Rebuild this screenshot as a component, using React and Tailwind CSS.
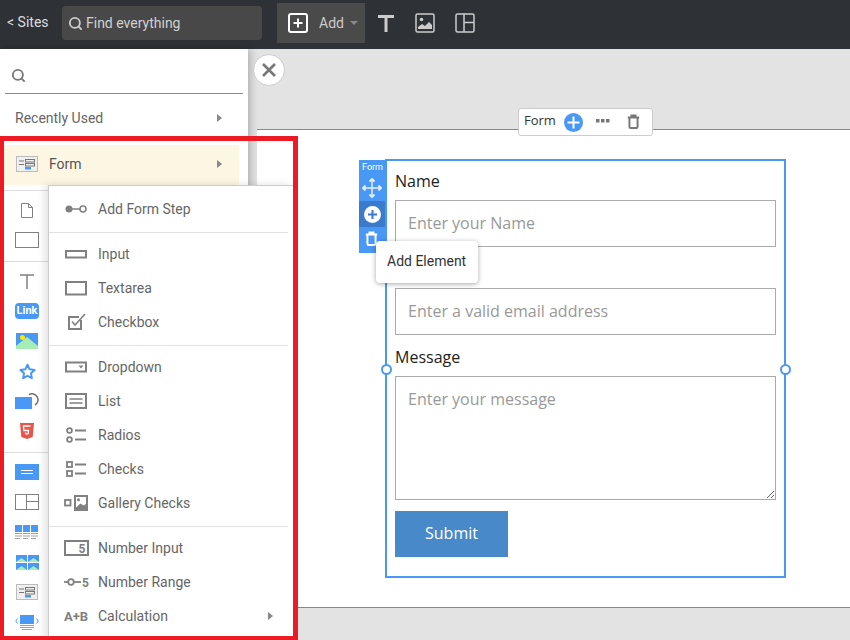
import { Search } from 'lucide-react';

const Caret = () => (
    <svg width="5" height="8" viewBox="0 0 5 8"><path d="M0 0l5 4-5 4z" fill="#888" /></svg>
);

const TrashIcon = ({ color }) => (
    <svg width="13" height="15" viewBox="0 0 16 18" fill="none" stroke={color} strokeWidth="2.400">
        <path d="M1 4h14M5.500 3.500V1.500h5v2M3 4.500V15.500a1.500 1.500 0 0 0 1.500 1.500h7a1.500 1.500 0 0 0 1.500-1.500V4.500" />
    </svg>
);

const FormGlyph = () => (
    <svg width="22" height="16" viewBox="0 0 22 16">
        <rect x="0.5" y="0.5" width="21" height="15" fill="#f0f0f0" stroke="#bbb" />
        <path d="M3 5h5M3 8.500h5" stroke="#777" />
        <rect x="9.500" y="3.500" width="9" height="2.500" fill="none" stroke="#777" />
        <rect x="9.500" y="7.500" width="9" height="2.500" fill="none" stroke="#777" />
        <rect x="9" y="11" width="6" height="2.500" fill="#4a98f5" />
    </svg>
);

const menuIcon = {
    step: (
        <>
            <circle cx="6" cy="10" r="3.500" fill="#808080" />
            <path d="M9 10h8" stroke="#808080" strokeWidth="1.500" />
            <circle cx="20" cy="10" r="3" fill="none" stroke="#808080" strokeWidth="1.500" />
        </>
    ),
    input: <rect x="3" y="7" width="20" height="6.500" fill="none" stroke="#808080" strokeWidth="2" />,
    textarea: <rect x="3" y="4" width="20" height="12.500" fill="none" stroke="#808080" strokeWidth="2" />,
    checkbox: (
        <>
            <path d="M18 8v9H6V5h10" fill="none" stroke="#808080" strokeWidth="2" />
            <path d="M9 9.500l3 3.500 10-11" fill="none" stroke="#808080" strokeWidth="1.600" />
        </>
    ),
    dropdown: (
        <>
            <rect x="3" y="5.500" width="20" height="9" fill="none" stroke="#808080" strokeWidth="2" />
            <path d="M15.500 8.500h5l-2.500 3z" fill="#808080" />
        </>
    ),
    list: (
        <>
            <rect x="3" y="3" width="20" height="14" fill="none" stroke="#808080" strokeWidth="2" />
            <path d="M6.500 8h13M6.500 12h13" stroke="#808080" strokeWidth="1.600" />
        </>
    ),
    radios: (
        <>
            <circle cx="6.500" cy="5.500" r="2.400" fill="none" stroke="#808080" strokeWidth="1.800" />
            <circle cx="6.500" cy="14.500" r="2.400" fill="none" stroke="#808080" strokeWidth="1.800" />
            <path d="M12 5.500h11M12 14.500h11" stroke="#808080" strokeWidth="1.800" />
        </>
    ),
    checks: (
        <>
            <rect x="4" y="3" width="5" height="5" fill="none" stroke="#808080" strokeWidth="1.800" />
            <rect x="4" y="12" width="5" height="5" fill="none" stroke="#808080" strokeWidth="1.800" />
            <path d="M12 5.500h11M12 14.500h11" stroke="#808080" strokeWidth="1.800" />
        </>
    ),
    gallery: (
        <>
            <rect x="2" y="7" width="5.500" height="5.500" fill="none" stroke="#808080" strokeWidth="1.800" />
            <rect x="11" y="2" width="14" height="16" fill="#808080" />
            <rect x="13" y="4" width="10" height="11" fill="#fff" />
            <circle cx="15.500" cy="6.800" r="1.500" fill="#808080" />
            <path d="M13 14.500l4.500-4 3 2 2.500-1.500v5.500h-10z" fill="#808080" />
        </>
    ),
    number: (
        <>
            <rect x="2" y="3" width="23" height="14" fill="none" stroke="#808080" strokeWidth="2" />
            <text x="19" y="14.500" textAnchor="middle" fontSize="12" fontWeight="700" fill="#808080" fontFamily="Roboto, sans-serif">5</text>
        </>
    ),
    range: (
        <>
            <path d="M1 10h17" stroke="#808080" strokeWidth="1.800" />
            <circle cx="8" cy="10" r="2.800" fill="#fff" stroke="#808080" strokeWidth="1.800" />
            <text x="22.500" y="14.500" textAnchor="middle" fontSize="12" fontWeight="700" fill="#808080" fontFamily="Roboto, sans-serif">5</text>
        </>
    ),
    calc: <text x="1" y="15" fontSize="13" fontWeight="700" fill="#808080" fontFamily="Roboto, sans-serif">A+B</text>,
};

const menuGroups = [
    [['step', 'Add Form Step']],
    [['input', 'Input'], ['textarea', 'Textarea'], ['checkbox', 'Checkbox']],
    [['dropdown', 'Dropdown'], ['list', 'List'], ['radios', 'Radios'], ['checks', 'Checks'], ['gallery', 'Gallery Checks']],
    [['number', 'Number Input'], ['range', 'Number Range'], ['calc', 'Calculation']],
];

const railGroups = [
    [
        <svg key="doc" width="14" height="17" viewBox="0 0 14 17" fill="none" stroke="#808080"><path d="M1.500 1.500v14h11V5.500l-4-4zM8.500 1.500v4h4" /></svg>,
        <svg key="rect" width="24" height="16" viewBox="0 0 24 16"><rect x="0.5" y="0.5" width="23" height="15" fill="none" stroke="#808080" /></svg>,
    ],
    [
        <svg key="t" width="14" height="15" viewBox="0 0 14 15" fill="none" stroke="#808080" strokeWidth="1.500"><path d="M0 1h14M7 1v14" /></svg>,
        <div key="link" className="w-[24px] h-[16px] rounded-[4px] bg-[#4a98f5] text-white text-[11px] font-bold leading-[16px] text-center">Link</div>,
        <svg key="img" width="22" height="16" viewBox="0 0 22 16">
            <rect width="22" height="16" fill="#4a98f5" />
            <path d="M0 13l11-9 11 9v3H0z" fill="#a5edb5" />
            <circle cx="6.500" cy="4.500" r="2.500" fill="#ffe600" />
        </svg>,
        <svg key="star" width="17" height="17" viewBox="0 0 24 24" fill="none" stroke="#4a98f5" strokeWidth="2.800" strokeLinejoin="round"><path d="M12 2.500l3 6.400 7 .9-5.100 4.800 1.300 6.900-6.200-3.400-6.200 3.400 1.300-6.900L2 9.800l7-.9z" /></svg>,
        <svg key="slide" width="24" height="16" viewBox="0 0 24 16">
            <path d="M14 1.600A6 6 0 0 1 20 12" fill="none" stroke="#707070" strokeWidth="1.500" />
            <rect y="4" width="17" height="12" fill="#4a98f5" />
        </svg>,
        <svg key="html" width="14" height="16" viewBox="0 0 14 16">
            <path d="M0 0h14l-1.300 14L7 16l-5.700-2z" fill="#e8554a" />
            <path d="M10.500 3h-7l.3 4.500h4.700l-.2 3-1.300.5-1.300-.5-.1-1" fill="none" stroke="#fff" strokeWidth="1.300" />
        </svg>,
    ],
    [
        <svg key="blue" width="24" height="16" viewBox="0 0 24 16"><rect width="24" height="16" fill="#4a98f5" /><path d="M6 6.500h12M6 9.500h12" stroke="#fff" /></svg>,
        <svg key="layout" width="24" height="16" viewBox="0 0 24 16" fill="none" stroke="#808080"><rect x="0.5" y="0.5" width="23" height="15" /><path d="M11.500 0.500v15M11.500 7.500h12" /></svg>,
        <svg key="grid" width="24" height="14" viewBox="0 0 24 14">
            <path d="M0 0h7v7H0zM8 0h7v7H8zM16 0h7v7h-7z" fill="#4a98f5" />
            <path d="M0 8.500h7M8 8.500h7M16 8.500h7M0 11h7M8 11h7M16 11h7M0 13.500h5M8 13.500h5M16 13.500h5" stroke="#888" strokeWidth="0.800" />
        </svg>,
        <svg key="tiles" width="23" height="15" viewBox="0 0 23 15">
            <path d="M0 0h11v7H0zM12 0h11v7H12zM0 8h11v7H0zM12 8h11v7H12z" fill="#4a98f5" />
            <path d="M0 7l5.500-4L11 7zM12 7l5.500-4L23 7zM0 15l5.500-4 5.500 4zM12 15l5.500-4 5.500 4z" fill="#a5edb5" />
        </svg>,
        <FormGlyph key="form" />,
        <svg key="carousel" width="24" height="15" viewBox="0 0 24 15">
            <rect x="5" y="0" width="14" height="9" fill="#4a98f5" />
            <path d="M5 10.500h14M5 12.500h14M7 14.500h10" stroke="#888" strokeWidth="0.800" />
            <path d="M2.500 3.500L0.800 6l1.700 2.500M21.500 3.500L23.200 6l-1.700 2.500" fill="none" stroke="#4a98f5" />
        </svg>,
    ],
];

const Field = ({ label, placeholder, first }) => (
    <div className={first ? 'pt-[9px]' : 'pt-[11px]'}>
        <label className="block h-[22px] text-[16px] leading-[22px] mb-2 text-[#222]">{label}</label>
        <input
            type="text"
            placeholder={placeholder}
            className="block w-full h-[47px] px-3 pb-[2px] border border-[#aaa] text-[16px] outline-none placeholder:text-[#999]"
        />
    </div>
);

const App = () => {
    return (
        <div className="relative w-[850px] h-[640px] overflow-hidden flex flex-col bg-[#e3e3e3] font-['Roboto',sans-serif]">
            <header className="h-[49px] pb-[3px] shrink-0 bg-[#2e3136] flex items-center text-[#d0d0d0]">
                <a className="ml-[7px] w-[55px] pb-[1px] text-[14px] text-[#ddd]">&lt; Sites</a>
                <div className="w-[200px] h-[34px] rounded-[4px] bg-[#484848] flex items-center pl-[6px] gap-[3px] text-[14px]">
                    <Search size={15} strokeWidth={3} color="#ccc" />
                    <span>Find everything</span>
                </div>
                <div className="ml-[15px] w-[88px] h-[40px] bg-[#4a4a4a] flex items-center pl-[11px]">
                    <svg width="20" height="20" viewBox="0 0 20 20" fill="none" stroke="#fff" strokeWidth="2">
                        <rect x="1" y="1" width="18" height="18" rx="2" />
                        <path d="M10 5.500v9M5.500 10h9" />
                    </svg>
                    <span className="ml-[11px] text-[14px] text-[#ccc]">Add</span>
                    <svg className="ml-[6px]" width="8" height="4" viewBox="0 0 8 4"><path d="M0 0h8L4 4z" fill="#888" /></svg>
                </div>
                <svg className="ml-[12px]" width="18" height="18" viewBox="0 0 18 18" fill="none" stroke="#ccc" strokeWidth="3"><path d="M1 2.500h16M9 2.500V18" /></svg>
                <svg className="ml-[20px]" width="20" height="20" viewBox="0 0 20 20">
                    <rect x="1" y="1" width="18" height="18" rx="1.500" fill="none" stroke="#ccc" strokeWidth="1.500" />
                    <circle cx="6.500" cy="6.500" r="1.800" fill="#ccc" />
                    <path d="M3 16v-2l4-3 3 2 4-4 3 3v4z" fill="#ccc" />
                </svg>
                <svg className="ml-[20px]" width="20" height="20" viewBox="0 0 20 20" fill="none" stroke="#ccc" strokeWidth="1.500">
                    <rect x="1" y="1" width="18" height="18" rx="1.500" />
                    <path d="M9 1v18M9 9.500h10" />
                </svg>
            </header>

            <div className="flex-1 flex min-h-0">
                <aside className="relative z-10 w-[248px] shrink-0 bg-white shadow-[2px_0_8px_rgba(0,0,0,0.25)]">
                    <div className="mx-[5px] h-[45px] border-b border-[#4a98f5] flex items-center pl-[6px] pt-[9px]">
                        <Search size={15} strokeWidth={3} color="#777" />
                    </div>
                    <div className="mt-[7px] h-[34px] pl-[15px] pr-[26px] flex items-center justify-between text-[14px] text-[#666]">
                        <span>Recently Used</span>
                        <Caret />
                    </div>
                    <div className="ml-[4px] mr-[9px] mt-[10px] h-[40px] pb-[2px] bg-[#fdf6e3] flex items-center pl-[12px] pr-[17px] text-[14px] text-[#555]">
                        <FormGlyph />
                        <span className="ml-[11px] flex-1">Form</span>
                        <Caret />
                    </div>
                    <div className="mt-[5px]">
                        {railGroups.map((group, i) => (
                            <div key={i} className="border-t border-[#ddd] pt-[4px] pb-[6px]">
                                {group.map((icon, j) => (
                                    <div key={j} className="w-[54px] h-[30px] flex items-center justify-center">
                                        {icon}
                                    </div>
                                ))}
                            </div>
                        ))}
                    </div>

                    <div className="absolute left-[48px] top-[136px] w-[245px] h-[460px] bg-white border-l border-t border-[#ccc] shadow-[-3px_0_8px_rgba(0,0,0,0.12)] pt-[2px] pr-[5px]">
                        {menuGroups.map((group, i) => (
                            <div
                                key={i}
                                className={i === menuGroups.length - 1 ? 'pt-[4px]' : 'pt-[4px] pb-[6px] border-b border-[#e2e2e2]'}
                            >
                                {group.map(([icon, label]) => (
                                    <div key={label} className="h-[34px] flex items-center pl-[14px] pr-[15px] text-[14px] text-[#666]">
                                        <svg width="26" height="20" viewBox="0 0 26 20" className="shrink-0">{menuIcon[icon]}</svg>
                                        <span className="ml-[9px] flex-1">{label}</span>
                                        {icon === 'calc' && <Caret />}
                                    </div>
                                ))}
                            </div>
                        ))}
                    </div>
                </aside>

                <main className="flex-1 min-w-0 pt-[80px]">
                    <div className="ml-[9px] h-[479px] bg-white border-y border-[#888] pt-[29px] pl-[128px] font-['Open_Sans',sans-serif]">
                        <form className="w-[401px] h-[419px] border-2 border-[#4a98f5] px-[8px]">
                            <Field first label="Name" placeholder="Enter your Name" />
                            <Field label="" placeholder="Enter a valid email address" />
                            <div className="pt-[11px]">
                                <label className="block text-[16px] leading-[22px] mb-2 text-[#222]">Message</label>
                                <textarea
                                    placeholder="Enter your message"
                                    className="block w-full h-[124px] px-3 py-[10px] border border-[#aaa] text-[16px] outline-none placeholder:text-[#999]"
                                />
                            </div>
                            <button type="button" className="mt-[11px] w-[113px] h-[46px] pb-[2px] bg-[#4889c9] text-white text-[16px]">Submit</button>
                        </form>
                    </div>
                </main>
            </div>

            {/* things sitting over the canvas */}
            <button className="absolute z-20 left-[253px] top-[54px] w-[32px] h-[32px] rounded-full bg-white border border-[#ccc] flex items-center justify-center">
                <svg width="16" height="16" viewBox="0 0 16 16" stroke="#777" strokeWidth="2.600"><path d="M2 2l12 12M14 2L2 14" /></svg>
            </button>

            <div className="absolute left-[518px] top-[108px] w-[135px] h-[28px] pb-[2px] bg-white border border-[#ccc] rounded-[3px] flex items-center pl-[5px] text-[13px] text-[#333]">
                <span className="font-['Open_Sans',sans-serif]">Form</span>
                <svg className="ml-[8px] mt-[3px]" width="19" height="19" viewBox="0 0 19 19">
                    <circle cx="9.500" cy="9.500" r="9.500" fill="#4a98f5" />
                    <path d="M9.500 3.500v12M3.500 9.500h12" stroke="#fff" strokeWidth="2" />
                </svg>
                <svg className="ml-[13px]" width="14" height="4" viewBox="0 0 14 4" fill="#777"><path d="M0 0h3.500v3.500H0zM5 0h3.500v3.500H5zM10 0h3.500v3.500H10z" /></svg>
                <div className="ml-[17px]"><TrashIcon color="#777" /></div>
            </div>

            <div className="absolute left-[359px] top-[160px] w-[27px] h-[93px] bg-[#4a98f5] flex flex-col items-center text-white">
                <span className="text-[9px] leading-[14px] font-['Roboto',sans-serif]">Form</span>
                <div className="h-[27px] flex items-center justify-center mr-[1px]">
                    <svg width="20" height="20" viewBox="0 0 20 20" fill="none" stroke="#e8f2ff" strokeWidth="1.400">
                        <path d="M10 1v18M1 10h18" />
                        <path d="M7.500 3.500L10 1l2.500 2.500M7.500 16.500L10 19l2.500-2.500M3.500 7.500L1 10l2.500 2.500M16.500 7.500L19 10l-2.500 2.500" strokeWidth="1.800" />
                    </svg>
                </div>
                <div className="w-[26px] mr-[1px] h-[26px] bg-[#3a7bcb] flex items-center justify-center">
                    <svg width="17" height="17" viewBox="0 0 17 17">
                        <circle cx="8.500" cy="8.500" r="8.500" fill="#fff" />
                        <path d="M8.500 4v9M4 8.500h9" stroke="#3a7bcb" strokeWidth="2" />
                    </svg>
                </div>
                <div className="mt-[4px] mr-[2px]"><TrashIcon color="#fff" /></div>
            </div>

            <div className="absolute left-[376px] top-[241px] w-[102px] h-[42px] pb-[2px] bg-white rounded-[4px] shadow-[0_1px_5px_rgba(0,0,0,0.35)] flex items-center pl-[11px] text-[14px] text-[#333]">
                Add Element
            </div>

            <span className="absolute left-[381px] top-[364px] w-[11px] h-[11px] rounded-full bg-white border-2 border-[#4a98f5]" />
            <span className="absolute left-[780px] top-[364px] w-[11px] h-[11px] rounded-full bg-white border-2 border-[#4a98f5]" />

            {/* red annotation frame */}
            <div className="absolute z-20 left-0 top-[136px] w-[298px] h-[504px] border-[5px] border-l-4 border-b-4 border-[#ed1c24] pointer-events-none" />
        </div>
    );
};

export default App;
